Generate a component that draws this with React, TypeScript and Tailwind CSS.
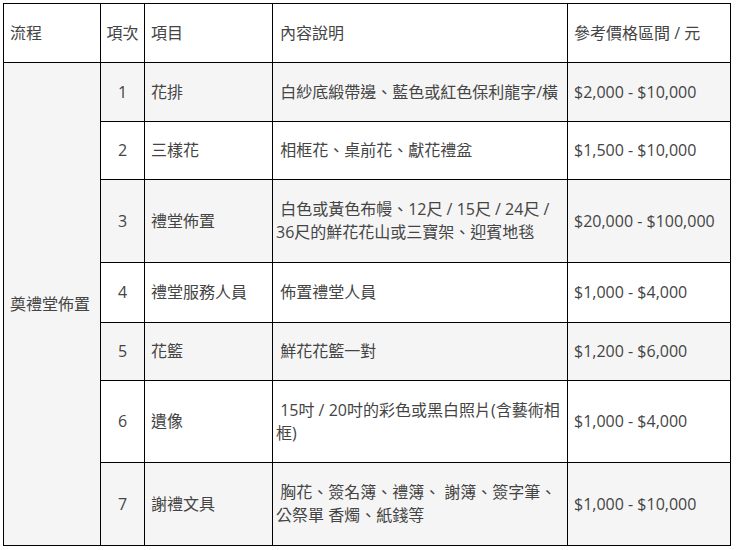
import React from 'react';

type Row = {
  no: number;
  item: string;
  desc: string[];
  price: string;
  height: string;
  striped: boolean;
};

const rows: Row[] = [
  { no: 1, item: '花排', desc: ['\u00a0白紗底緞帶邊、藍色或紅色保利龍字/橫'], price: '$2,000 - $10,000', height: 'h-[59px]', striped: true },
  { no: 2, item: '三樣花', desc: ['\u00a0相框花、桌前花、獻花禮盆'], price: '$1,500 - $10,000', height: 'h-[58px]', striped: false },
  { no: 3, item: '禮堂佈置', desc: ['\u00a0白色或黃色布幔、12尺 / 15尺 / 24尺 /', '36尺的鮮花花山或三寶架、迎賓地毯'], price: '$20,000 - $100,000', height: 'h-[83px]', striped: true },
  { no: 4, item: '禮堂服務人員', desc: ['\u00a0佈置禮堂人員'], price: '$1,000 - $4,000', height: 'h-[60px]', striped: false },
  { no: 5, item: '花籃', desc: ['\u00a0鮮花花籃一對'], price: '$1,200 - $6,000', height: 'h-[58px]', striped: true },
  { no: 6, item: '遺像', desc: ['\u00a015吋 / 20吋的彩色或黑白照片(含藝術相', '框)'], price: '$1,000 - $4,000', height: 'h-[82px]', striped: false },
  { no: 7, item: '謝禮文具', desc: ['\u00a0胸花、簽名簿、禮簿、 謝簿、簽字筆、', '公祭單 香燭、紙錢等'], price: '$1,000 - $10,000', height: 'h-[83px]', striped: true },
];

export default function App() {
  return (
    <div className="min-h-[550px] w-[736px] bg-white pl-[3px] pt-[3px] font-['Open_Sans','Noto_Sans_CJK_TC',sans-serif] text-[16px] leading-[23px] text-[#444]">
      <table className="w-[727px] table-fixed border-collapse">
        <colgroup>
          <col className="w-[97px]" />
          <col className="w-[44px]" />
          <col className="w-[128px]" />
          <col className="w-[295px]" />
          <col className="w-[163px]" />
        </colgroup>
        <thead>
          <tr className="h-[59px] bg-white">
            <th className="border border-black pl-[6px] text-left align-middle font-normal">流程</th>
            <th className="border border-black text-center align-middle font-normal">項次</th>
            <th className="border border-black pl-[6px] text-left align-middle font-normal">項目</th>
            <th className="border border-black pl-[7px] text-left align-middle font-normal">內容說明</th>
            <th className="border border-black pl-[6px] text-left align-middle font-normal">參考價格區間 / 元</th>
          </tr>
        </thead>
        <tbody>
          {rows.map((row, i) => (
            <tr key={row.no} className={`${row.height} ${row.striped ? 'bg-[#f5f5f5]' : 'bg-white'}`}>
              {i === 0 && (
                <td rowSpan={rows.length} className="border border-black bg-[#f5f5f5] pl-[6px] align-middle">
                  奠禮堂佈置
                </td>
              )}
              <td className="border border-black text-center align-middle">{row.no}</td>
              <td className="border border-black pl-[6px] align-middle">{row.item}</td>
              <td className="border border-black pl-[3px] align-middle">
                {row.desc.map((line, j) => (
                  <div key={j} className="whitespace-nowrap">{line}</div>
                ))}
              </td>
              <td className="border border-black pl-[6px] align-middle whitespace-nowrap">{row.price}</td>
            </tr>
          ))}
        </tbody>
      </table>
    </div>
  );
}
